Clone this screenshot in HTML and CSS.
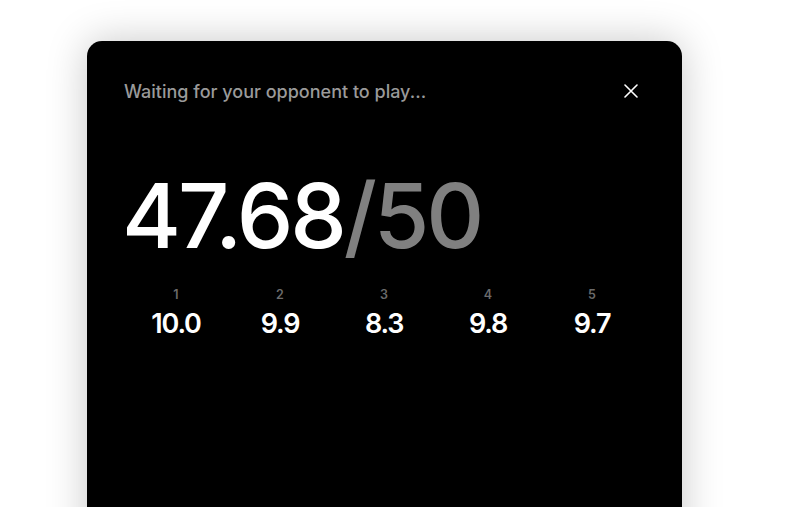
FILE: index.html
```html
<!DOCTYPE html>
<html>
<head>
<meta charset="utf-8">
<link rel="stylesheet" href="styles.css">
</head>
<body>
<div class="card">
  <div class="header">
    <span class="title">Waiting for your opponent to play...</span>
    <button class="close" aria-label="Close">
      <svg width="14" height="14" viewBox="0 0 14 14"><path d="M1 1L13 13M13 1L1 13" stroke="#fff" stroke-width="1.6" stroke-linecap="round"/></svg>
    </button>
  </div>
  <div class="total"><span class="score">47.68</span><span class="max">/50</span></div>
  <div class="rounds">
    <div class="round"><span class="num">1</span><span class="val">10.0</span></div>
    <div class="round"><span class="num">2</span><span class="val">9.9</span></div>
    <div class="round"><span class="num">3</span><span class="val">8.3</span></div>
    <div class="round"><span class="num">4</span><span class="val">9.8</span></div>
    <div class="round"><span class="num">5</span><span class="val">9.7</span></div>
  </div>
</div>
</body>
</html>
```
FILE: styles.css
```css
html, body {
  margin: 0;
  padding: 0;
  background: #fff;
  overflow: hidden;
  height: 507px;
}
body {
  font-family: Inter, "Liberation Sans", sans-serif;
}
.card {
  margin: 41px 0 0 87px;
  width: 595px;
  height: 520px;
  box-sizing: border-box;
  background: #000;
  border-radius: 15px;
  box-shadow: 0 0 40px rgba(0,0,0,0.22);
  padding: 38px 37px 0 37px;
}
.header {
  display: flex;
  justify-content: space-between;
  align-items: center;
  height: 24px;
}
.title {
  color: #9a9a9a;
  font-size: 18px;
  font-weight: 500;
  letter-spacing: 0;
}
.close {
  background: none;
  border: 0;
  padding: 0;
  margin-right: 7px;
  width: 14px;
  height: 14px;
  display: flex;
}
.total {
  margin-top: 68px;
  margin-left: -2px;
  font-size: 90px;
  line-height: 90px;
  font-weight: 500;
  letter-spacing: -0.035em;
}
.score { color: #fff; }
.max { color: #808080; }
.rounds {
  margin-top: 26px;
  display: grid;
  grid-template-columns: repeat(5, 104px);
}
.round {
  display: flex;
  flex-direction: column;
  align-items: center;
}
.num {
  color: #6b6b6b;
  font-size: 12.5px;
  font-weight: 600;
  line-height: 16px;
  margin-bottom: 6px;
}
.val {
  color: #fff;
  font-size: 27px;
  font-weight: 600;
  line-height: 30px;
  letter-spacing: -0.045em;
}
```
